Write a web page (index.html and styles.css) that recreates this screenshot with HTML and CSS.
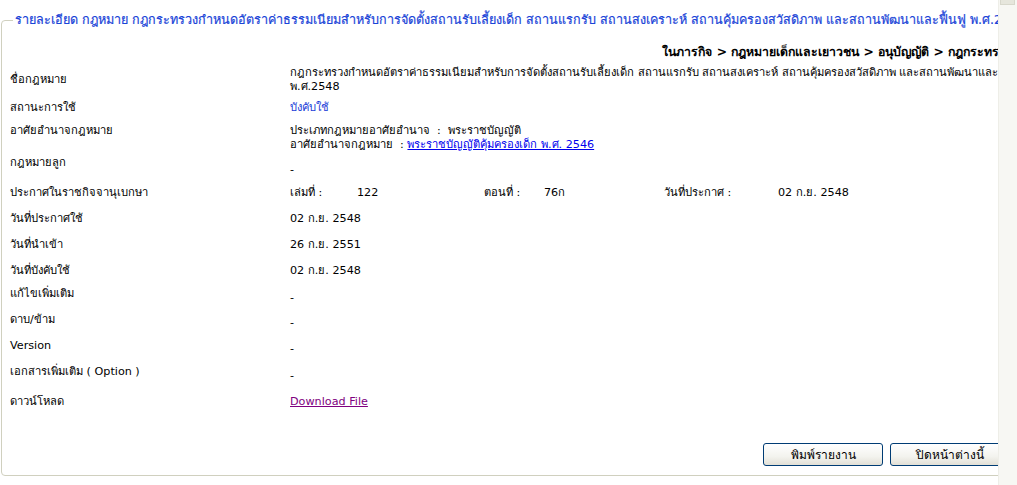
FILE: index.html
```html
<!DOCTYPE html>
<html lang="th">
<head>
<meta charset="utf-8">
<title>รายละเอียด กฎหมาย</title>
<link rel="stylesheet" href="styles.css">
</head>
<body>
<div class="page">
  <div class="viewport">
    <fieldset class="box">
      <legend class="box-title">รายละเอียด กฎหมาย กฎกระทรวงกำหนดอัตราค่าธรรมเนียมสำหรับการจัดตั้งสถานรับเลี้ยงเด็ก สถานแรกรับ สถานสงเคราะห์ สถานคุ้มครองสวัสดิภาพ และสถานพัฒนาและฟื้นฟู พ.ศ.2548</legend>
      <div class="crumb">ในภารกิจ &gt; กฎหมายเด็กและเยาวชน &gt; อนุบัญญัติ &gt; กฎกระทร</div>
      <div class="rows">
        <div class="row r-name">
          <div class="label lab-mid">ชื่อกฎหมาย</div>
          <div class="value">กฎกระทรวงกำหนดอัตราค่าธรรมเนียมสำหรับการจัดตั้งสถานรับเลี้ยงเด็ก สถานแรกรับ สถานสงเคราะห์ สถานคุ้มครองสวัสดิภาพ และสถานพัฒนาและฟื้นฟู<br>พ.ศ.2548</div>
        </div>
        <div class="row r-status">
          <div class="label">สถานะการใช้</div>
          <div class="value status">บังคับใช้</div>
        </div>
        <div class="row r-auth">
          <div class="label">อาศัยอำนาจกฎหมาย</div>
          <div class="value">ประเภทกฎหมายอาศัยอำนาจ&nbsp; :&nbsp; พระราชบัญญัติ<br>อาศัยอำนาจกฎหมาย&nbsp; : <a class="link" href="#">พระราชบัญญัติคุ้มครองเด็ก พ.ศ. 2546</a></div>
        </div>
        <div class="row r-child">
          <div class="label">กฎหมายลูก</div>
          <div class="value dash d7">-</div>
        </div>
        <div class="row r-gazette">
          <div class="label">ประกาศในราชกิจจานุเบกษา</div>
          <div class="value gazette">
            <span class="g-k1">เล่มที่ :</span><span class="g-v1">122</span>
            <span class="g-k2">ตอนที่ :</span><span class="g-v2">76ก</span>
            <span class="g-k3">วันที่ประกาศ :</span><span class="g-v3">02 ก.ย. 2548</span>
          </div>
        </div>
        <div class="row r-26">
          <div class="label">วันที่ประกาศใช้</div>
          <div class="value">02 ก.ย. 2548</div>
        </div>
        <div class="row r-26">
          <div class="label">วันที่นำเข้า</div>
          <div class="value">26 ก.ย. 2551</div>
        </div>
        <div class="row r-23">
          <div class="label">วันที่บังคับใช้</div>
          <div class="value">02 ก.ย. 2548</div>
        </div>
        <div class="row r-26">
          <div class="label">แก้ไขเพิ่มเติม</div>
          <div class="value dash d4">-</div>
        </div>
        <div class="row r-26">
          <div class="label">ดาบ/ข้าม</div>
          <div class="value dash d3">-</div>
        </div>
        <div class="row r-26">
          <div class="label">Version</div>
          <div class="value dash d3">-</div>
        </div>
        <div class="row r-30">
          <div class="label">เอกสารเพิ่มเติม ( Option )</div>
          <div class="value dash d4">-</div>
        </div>
        <div class="row r-26">
          <div class="label">ดาวน์โหลด</div>
          <div class="value"><a class="visited" href="#">Download File</a></div>
        </div>
      </div>
      <div class="actions">
        <button class="btn" type="button">พิมพ์รายงาน</button>
        <button class="btn" type="button">ปิดหน้าต่างนี้</button>
      </div>
    </fieldset>
  </div>
  <div class="scrollbar"><div class="thumb"></div></div>
</div>
</body>
</html>
```

FILE: styles.css
```css
html, body {
  margin: 0;
  padding: 0;
  background: #ffffff;
}
body {
  font-family: Tahoma, "DejaVu Sans", "Noto Sans", sans-serif;
  font-size: 11.2px;
  color: #000000;
}
.page {
  display: flex;
  width: 1017px;
  height: 485px;
  overflow: hidden;
}
.viewport {
  width: 998px;
  height: 485px;
  overflow: hidden;
  flex: none;
}
.scrollbar {
  width: 19px;
  flex: none;
  background: #f7f7f3;
  border-left: 1px solid #eeeee8;
  box-sizing: border-box;
}
.thumb {
  margin-left: 1px;
  width: 13px;
  height: 4px;
  background: #e6e6dc;
  border: 1px solid #d8d8cc;
  border-top: none;
}
.box {
  margin: 10px 0 0 1px;
  padding: 0 0 0 8px;
  width: 1060px;
  height: 466px;
  box-sizing: border-box;
  border: 1px solid #d0d0bf;
  border-radius: 4px;
  min-width: 0;
}
.box-title {
  color: #1a44d8;
  font-size: 12.6px;
  white-space: nowrap;
  padding: 0 2px;
  margin-left: 3px;
  -webkit-text-stroke: 0.2px #1a44d8;
}
.crumb {
  width: 989px;
  text-align: right;
  font-weight: bold;
  font-size: 12.3px;
  white-space: nowrap;
  margin-top: 12px;
  height: 20px;
  line-height: 20px;
}
.rows {
  display: flex;
  flex-direction: column;
  margin-top: 4px;
}
.row {
  display: flex;
  box-sizing: border-box;
  height: 26px;
  flex: none;
}
.label {
  width: 280px;
  flex: none;
  line-height: 14px;
}
.value {
  line-height: 14px;
  white-space: nowrap;
}
.r-name { height: 35px; }
.r-name .lab-mid { padding-top: 7px; }
.r-status { height: 23px; }
.status { color: #1a3cd8; }
.r-auth { height: 32px; }
.link { color: #0000ee; text-decoration: underline; }
.r-child { height: 30px; }
.r-gazette { height: 26px; }
.r-26 { height: 26px; }
.r-23 { height: 23px; }
.r-30 { height: 30px; }
.d7 { padding-top: 7px; }
.d4 { padding-top: 4px; }
.d3 { padding-top: 3px; }
.gazette { display: flex; }
.g-k1 { width: 67px; }
.g-v1 { width: 127px; }
.g-k2 { width: 60px; }
.g-v2 { width: 120px; }
.g-k3 { width: 114px; }
.visited { color: #800080; text-decoration: underline; }
.actions {
  display: flex;
  gap: 7px;
  margin-top: 22px;
  padding-left: 753px;
}
.btn {
  width: 120px;
  height: 23px;
  font-family: Tahoma, "DejaVu Sans", "Noto Sans", sans-serif;
  font-size: 12px;
  color: #000000;
  border: 1px solid #003c74;
  border-radius: 3px;
  background: linear-gradient(#ffffff, #f3f3ee 60%, #e2e0d6);
  padding: 0;
}
```
